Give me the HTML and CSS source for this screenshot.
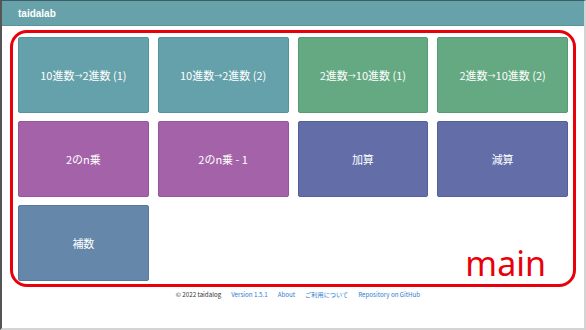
FILE: index.html
```html
<!DOCTYPE html>
<html lang="ja">
<head>
  <meta charset="UTF-8" />
  <meta name="viewport" content="width=device-width, initial-scale=1.0"/>
  <title>taidalab</title>
  <link rel="stylesheet" href="styles.css">
</head>
<body>

  <header class="navbar">
    <span class="brand">taidalab</span>
  </header>

  <main class="main">
    <div class="tiles">
      <a class="tile teal" href="#">10進数<span class="arrow">→</span>2進数 (1)</a>
      <a class="tile teal" href="#">10進数<span class="arrow">→</span>2進数 (2)</a>
      <a class="tile green" href="#">2進数<span class="arrow">→</span>10進数 (1)</a>
      <a class="tile green" href="#">2進数<span class="arrow">→</span>10進数 (2)</a>
      <a class="tile purple" href="#">2のn乗</a>
      <a class="tile purple" href="#">2のn乗 - 1</a>
      <a class="tile indigo" href="#">加算</a>
      <a class="tile indigo" href="#">減算</a>
      <a class="tile steel" href="#">補数</a>
    </div>
    <!-- annotation label -->
    <span class="main-label">main</span>
  </main>

  <footer class="footer">
    <span class="copy">© 2022 taidalog</span>
    <a href="#">Version 1.5.1</a>
    <a href="#">About</a>
    <a href="#">ご利用について</a>
    <a href="#">Repository on GitHub</a>
  </footer>

</body>
</html>
```

FILE: styles.css
```css
* {
  box-sizing: border-box;
}

html, body {
  height: 100%;
}

body {
  margin: 0;
  font-family: "Noto Sans CJK JP", "Noto Sans", sans-serif;
  background: #fff;
  border-left: 2px solid #555;
  border-top: 1px solid #3d5d62;
  border-right: 2px solid #d4d4d4;
  border-bottom: 2px solid #d4d4d4;
  overflow: hidden;
}

.navbar {
  height: 25px;
  background: #67a2aa;
  border-bottom: 1px solid #5a939b;
  display: flex;
  align-items: center;
  padding-left: 16px;
}

.brand {
  font-family: "Liberation Sans", Arial, sans-serif;
  font-weight: bold;
  font-size: 10px;
  color: #fff;
}

/* Main area, outlined in red */
.main {
  position: relative;
  margin: 4px 8px 0 8px;
  border: 3px solid #e8000b;
  border-radius: 17px;
  padding: 4px 5px 3px 5px;
}

.tiles {
  display: grid;
  grid-template-columns: repeat(4, 1fr);
  grid-auto-rows: 76px;
  column-gap: 9px;
  row-gap: 8px;
}

.tile {
  display: flex;
  align-items: center;
  justify-content: center;
  border-radius: 2px;
  border: 1px solid;
  color: #fff;
  font-size: 11px;
  text-decoration: none;
  white-space: nowrap;
}

.tile .arrow {
  font-size: 8px;
}

.teal   { background: #65a1aa; border-color: #57939c; }
.green  { background: #64a982; border-color: #559b74; }
.purple { background: #a463a9; border-color: #96559b; }
.indigo { background: #636ea9; border-color: #55609b; }
.steel  { background: #6587aa; border-color: #57799c; }

.main-label {
  position: absolute;
  right: 27px;
  bottom: 1px;
  font-family: "Noto Sans", sans-serif;
  font-size: 34px;
  line-height: 40px;
  color: #e8000b;
}

.footer {
  display: flex;
  justify-content: center;
  gap: 10px;
  padding-top: 3px;
  padding-left: 10px;
  font-size: 6.2px;
  line-height: 9px;
  color: #333;
}

.footer a {
  color: #2f7bd0;
  text-decoration: none;
}
```
